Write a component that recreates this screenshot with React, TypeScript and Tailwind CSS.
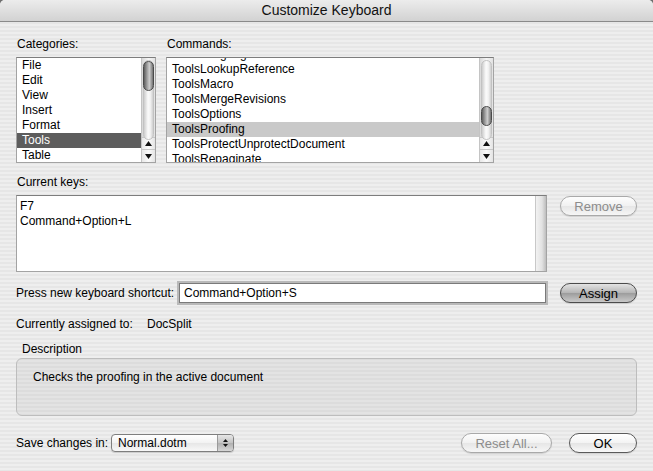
import React from "react";

function UpTri() {
  return (
    <svg width="7" height="5" viewBox="0 0 7 5">
      <path d="M3.5 0 L7 5 L0 5 Z" fill="#111" />
    </svg>
  );
}
function DownTri() {
  return (
    <svg width="7" height="5" viewBox="0 0 7 5">
      <path d="M0 0 L7 0 L3.5 5 Z" fill="#111" />
    </svg>
  );
}

function Scrollbar({ thumb }: { thumb: string }) {
  return (
    <div className="w-[14px] h-full shrink-0 flex flex-col border-l border-[#c4c4c4] bg-[linear-gradient(90deg,#d9d9d9,#f6f6f6_50%,#e2e2e2)]">
      <div className="relative flex-1">
        <div className="absolute left-[1px] right-[1px] top-[2px] bottom-[-3px] rounded-full border border-[#c2c2c2] bg-[linear-gradient(90deg,#cdcdcd,#fbfbfb_45%,#f2f2f2_70%,#d0d0d0)]" />
        <div
          className={
            "absolute left-[1px] right-[1px] rounded-full border border-[#4a4a4a] bg-[linear-gradient(90deg,#5e5e5e,#a9a9a9_40%,#cdcdcd_60%,#727272)] " +
            thumb
          }
        />
      </div>
      <div className="h-[12px] border-t border-[#c8c8c8] flex items-center justify-center bg-[linear-gradient(90deg,#e8e8e8,#fbfbfb_50%,#e4e4e4)]">
        <UpTri />
      </div>
      <div className="h-[13px] border-t border-[#c8c8c8] flex items-center justify-center bg-[linear-gradient(90deg,#e8e8e8,#fbfbfb_50%,#e4e4e4)]">
        <DownTri />
      </div>
    </div>
  );
}

function AquaButton({
  label,
  className,
  variant,
}: {
  label: string;
  className: string;
  variant: "normal" | "disabled" | "default";
}) {
  const styles =
    variant === "disabled"
      ? "border-[#a9a9a9] text-[#8c8c8c] bg-[linear-gradient(180deg,#fdfdfd,#f1f1f1_50%,#e6e6e6_51%,#f6f6f6)]"
      : variant === "default"
      ? "border-[#4c4c4c] text-black bg-[linear-gradient(180deg,#e4e4e4,#b4b4b4_50%,#9c9c9c_51%,#c9c9c9)]"
      : "border-[#5a5a5a] text-black bg-[linear-gradient(180deg,#ffffff,#f3f3f3_50%,#e4e4e4_51%,#f8f8f8)]";
  return (
    <div
      className={
        "h-[20px] rounded-full border flex items-center justify-center text-[13px] leading-none shadow-[0_1px_1px_rgba(0,0,0,0.12)] " +
        styles +
        " " +
        className
      }
    >
      {label}
    </div>
  );
}

const categories = ["File", "Edit", "View", "Insert", "Format", "Tools", "Table"];
const commands = [
  "ToolsLanguage",
  "ToolsLookupReference",
  "ToolsMacro",
  "ToolsMergeRevisions",
  "ToolsOptions",
  "ToolsProofing",
  "ToolsProtectUnprotectDocument",
  "ToolsRepaginate",
];

export default function App() {
  return (
    <div className="w-[653px] h-[471px] bg-[#6e6e6e] overflow-hidden font-[family-name:'Liberation_Sans',Arial,sans-serif] text-[12px] text-black">
      <div className="h-full rounded-t-[5px] overflow-hidden flex flex-col bg-[repeating-linear-gradient(180deg,#eeeeee_0px,#eeeeee_2px,#e6e6e6_2px,#e6e6e6_4px)]">
        {/* title bar */}
        <div className="h-[22px] shrink-0 flex items-center justify-center bg-[linear-gradient(180deg,#ececec,#d2d2d2)] border-b border-[#8a8a8a] text-[14px] text-[#111]">
          Customize Keyboard
        </div>

        <div className="flex-1 flex flex-col pl-[16px] pr-[16px]">
          {/* labels */}
          <div className="flex mt-[15px] h-[15px] leading-[15px]">
            <div className="w-[150px] pl-[1px]">Categories:</div>
            <div className="pl-[1px]">Commands:</div>
          </div>

          {/* lists */}
          <div className="flex mt-[5px] h-[106px] gap-[10px]">
            <div className="w-[140px] h-full flex bg-white border border-[#a3a3a3] border-t-[#7d7d7d] overflow-hidden">
              <div className="flex-1 pt-[0px] overflow-hidden">
                {categories.map((c) => (
                  <div
                    key={c}
                    className={
                      "h-[15px] leading-[15px] pl-[5px] " +
                      (c === "Tools" ? "bg-[#5d5d5d] text-white" : "")
                    }
                  >
                    {c}
                  </div>
                ))}
              </div>
              <Scrollbar thumb="top-[3px] h-[30px]" />
            </div>

            <div className="w-[328px] h-full flex bg-white border border-[#a3a3a3] border-t-[#7d7d7d] overflow-hidden">
              <div className="flex-1 overflow-hidden">
                <div className="-mt-[11px]">
                  {commands.map((c) => (
                    <div
                      key={c}
                      className={
                        "h-[15px] leading-[15px] pl-[5px] " +
                        (c === "ToolsProofing" ? "bg-[#c9c9c9]" : "")
                      }
                    >
                      {c}
                    </div>
                  ))}
                </div>
              </div>
              <Scrollbar thumb="top-[48px] h-[20px]" />
            </div>
          </div>

          {/* current keys */}
          <div className="mt-[12px] h-[15px] leading-[15px] pl-[1px]">Current keys:</div>
          <div className="mt-[5px] flex items-start">
            <div className="w-[531px] h-[77px] flex bg-white border border-[#a3a3a3] border-t-[#7d7d7d]">
              <div className="flex-1 pt-[3px] pl-[3px] leading-[15px]">
                <div>F7</div>
                <div>Command+Option+L</div>
              </div>
              <div className="w-[11px] h-full border-l border-[#c8c8c8] bg-[linear-gradient(90deg,#f2f2f2,#e2e2e2_60%,#bdbdbd)]" />
            </div>
            <AquaButton label="Remove" variant="disabled" className="ml-[13px] w-[77px] mt-[1px]" />
          </div>

          {/* shortcut */}
          <div className="mt-[11px] flex items-center h-[20px]">
            <div className="w-[163px] leading-[15px]">Press new keyboard shortcut:</div>
            <div className="w-[367px] h-[20px] bg-white border border-[#7a7a7a] shadow-[0_0_0_2px_#b9b9b9] flex items-center pl-[4px] leading-[15px]">
              Command+Option+S
            </div>
            <AquaButton label="Assign" variant="default" className="ml-[14px] w-[77px]" />
          </div>

          {/* currently assigned */}
          <div className="mt-[14px] flex h-[15px] leading-[15px]">
            <div className="w-[131px]">Currently assigned to:</div>
            <div>DocSplit</div>
          </div>

          {/* description */}
          <div className="mt-[10px] h-[15px] leading-[15px] pl-[6px]">Description</div>
          <div className="mt-[1px] h-[58px] rounded-[6px] border border-[#bdbdbd] bg-black/[0.045] pl-[16px] pt-[11px] leading-[15px]">
            Checks the proofing in the active document
          </div>

          {/* bottom row */}
          <div className="mt-[17px] flex items-center h-[20px]">
            <div className="w-[95px] leading-[15px]">Save changes in:</div>
            <div className="w-[123px] h-[18px] flex rounded-[4px] border border-[#7e7e7e] bg-[linear-gradient(180deg,#ffffff,#f2f2f2_50%,#e6e6e6_51%,#f8f8f8)] shadow-[0_1px_1px_rgba(0,0,0,0.15)] overflow-hidden">
              <div className="flex-1 pl-[6px] leading-[16px]">Normal.dotm</div>
              <div className="w-[16px] flex flex-col items-center justify-center gap-[2px] bg-[linear-gradient(180deg,#e6e6e6,#c2c2c2_50%,#b0b0b0_51%,#d6d6d6)] border-l border-[#9a9a9a]">
                <svg width="5" height="3" viewBox="0 0 5 3">
                  <path d="M2.5 0 L5 3 L0 3 Z" fill="#111" />
                </svg>
                <svg width="5" height="3" viewBox="0 0 5 3">
                  <path d="M0 0 L5 0 L2.5 3 Z" fill="#111" />
                </svg>
              </div>
            </div>
            <div className="flex-1" />
            <AquaButton label="Reset All..." variant="disabled" className="w-[91px]" />
            <AquaButton label="OK" variant="normal" className="ml-[17px] w-[68px]" />
          </div>
        </div>
      </div>
    </div>
  );
}
